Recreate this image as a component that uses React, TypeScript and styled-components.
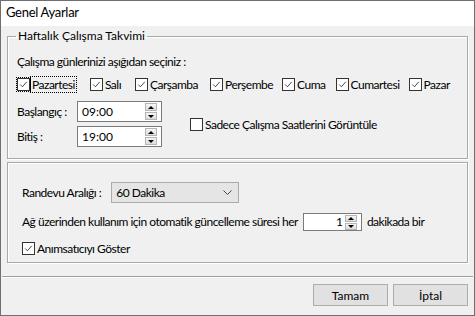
import React from "react";
import styled, { createGlobalStyle } from "styled-components";

const GlobalStyle = createGlobalStyle`
    html, body {
        margin: 0;
        padding: 0;
        background: #ffffff;
    }
    body {
        font-family: Lato, "Noto Sans", sans-serif;
        font-size: 12px;
        letter-spacing: -0.5px;
        color: #000000;
    }
`;

const Window = styled.div`
    width: 475px;
    height: 316px;
    box-sizing: border-box;
    border: 1px solid #6f6f6f;
    background: #f0f0f0;
    display: flex;
    flex-direction: column;
`;

const TitleBar = styled.div`
    height: 25px;
    line-height: 23px;
    padding-left: 5px;
    background: #ffffff;
    font-size: 13px;
    letter-spacing: -0.3px;
`;

const Body = styled.div`
    padding: 2px 6px 13px 6px;
    display: flex;
    flex-direction: column;
    gap: 3px;
`;

const GroupBox = styled.fieldset<{ $height: number; $pad: number }>`
    margin: 0;
    padding: 0 ${(p) => p.$pad}px;
    height: ${(p) => p.$height}px;
    box-sizing: border-box;
    border: 1px solid #a9a9a9;
    box-shadow: inset 1px 1px 0 #ffffff, 1px 1px 0 #ffffff;
    border-radius: 0;
    min-width: 0;

    legend {
        margin-left: -1px;
        padding: 0 2px;
        line-height: 16px;
        letter-spacing: 0;
    }
`;

const Stack = styled.div<{ $gap: number; $top: number }>`
    display: flex;
    flex-direction: column;
    gap: ${(p) => p.$gap}px;
    padding-top: ${(p) => p.$top}px;
`;

const Row = styled.div<{ $gap?: number; $top?: number }>`
    display: flex;
    align-items: center;
    gap: ${(p) => p.$gap ?? 0}px;
    margin-top: ${(p) => p.$top ?? 0}px;
    white-space: nowrap;
`;

const Label = styled.span`
    line-height: 16px;
`;

const CheckItem = styled.label<{ $focused?: boolean; $after?: number }>`
    display: inline-flex;
    align-items: center;
    gap: 1px;
    line-height: 15px;
    margin-right: ${(p) => p.$after ?? 0}px;

    span {
        outline: ${(p) => (p.$focused ? "1px dotted #000" : "none")};
        outline-offset: 0;
        padding: 0 1px;
    }
`;

const Box = styled.span`
    width: 13px;
    height: 13px;
    box-sizing: border-box;
    border: 1px solid #333333;
    background: #ffffff;
    display: inline-flex;
    align-items: center;
    justify-content: center;
    flex-shrink: 0;
`;

const Check: React.FC<{
    checked: boolean;
    label: string;
    focused?: boolean;
    after?: number;
}> = ({ checked, label, focused, after }) => (
    <CheckItem $focused={focused} $after={after}>
        <Box>
            {checked && (
                <svg width="11" height="11" viewBox="0 0 11 11">
                    <polyline
                        points="1.5,5.5 4.2,8.3 9.5,2.2"
                        fill="none"
                        stroke="#222"
                        strokeWidth="1"
                    />
                </svg>
            )}
        </Box>
        <span>{label}</span>
    </CheckItem>
);

const TimeGrid = styled.div`
    display: grid;
    grid-template-columns: 60px 85px;
    row-gap: 4px;
    align-items: center;
`;

const Field = styled.div<{ $width: number; $height: number; $align?: string }>`
    width: ${(p) => p.$width}px;
    height: ${(p) => p.$height}px;
    box-sizing: border-box;
    border: 1px solid #7a7a7a;
    background: #ffffff;
    display: flex;
    align-items: center;
    padding-left: 4px;
    padding-right: 4px;
    gap: 2px;

    .value {
        flex: 1;
        text-align: ${(p) => p.$align ?? "left"};
        line-height: 16px;
        letter-spacing: 0;
    }
`;

const Spin = styled.div`
    width: 12px;
    display: flex;
    flex-direction: column;
    gap: 1px;
`;

const SpinButton = styled.div<{ $up: boolean; $h: number }>`
    height: ${(p) => p.$h}px;
    box-sizing: border-box;
    border: 1px solid #b5b5b5;
    background: linear-gradient(#f6f6f6, #dcdcdc);
    display: flex;
    align-items: center;
    justify-content: center;

    &::after {
        content: "";
        border-left: 3px solid transparent;
        border-right: 3px solid transparent;
        ${(p) =>
            p.$up
                ? "border-bottom: 3px solid #000;"
                : "border-top: 3px solid #000;"}
    }
`;

const Spinner: React.FC<{ size: number }> = ({ size }) => (
    <Spin>
        <SpinButton $up $h={size} />
        <SpinButton $up={false} $h={size} />
    </Spin>
);

const Select = styled.div`
    width: 128px;
    height: 21px;
    box-sizing: border-box;
    border: 1px solid #acacac;
    background: #e5e5e5;
    display: flex;
    align-items: center;
    justify-content: space-between;
    padding: 0 6px 0 4px;
    line-height: 16px;
`;

const Separator = styled.div`
    height: 0;
    border-top: 1px solid #a0a0a0;
    border-bottom: 1px solid #ffffff;
    margin: 0 1px;
`;

const Footer = styled.div`
    flex: 1;
    display: flex;
    justify-content: flex-end;
    align-items: flex-start;
    gap: 5px;
    padding: 6px 6px 0 0;
`;

const Button = styled.button`
    width: 75px;
    height: 22px;
    box-sizing: border-box;
    border: 1px solid #adadad;
    background: #e1e1e1;
    font-family: inherit;
    font-size: 12px;
    letter-spacing: 0;
    color: #000;
    padding: 0;
`;

// extra space after each day so the boxes land where the original dialog put them
const days: { name: string; after: number }[] = [
    { name: "Pazartesi", after: 3 },
    { name: "Salı", after: 2 },
    { name: "Çarşamba", after: 0 },
    { name: "Perşembe", after: -3 },
    { name: "Cuma", after: -2 },
    { name: "Cumartesi", after: -3 },
    { name: "Pazar", after: 0 },
];

const App: React.FC = () => {
    return (
        <>
            <GlobalStyle />
            <Window>
                <TitleBar>Genel Ayarlar</TitleBar>
                <Body>
                    <GroupBox $height={131} $pad={9}>
                        <legend>Haftalık Çalışma Takvimi</legend>
                        <Stack $gap={7} $top={10}>
                            <Label>Çalışma günlerinizi aşığıdan seçiniz :</Label>
                            <Row $gap={11}>
                                {days.map((day, i) => (
                                    <Check
                                        key={day.name}
                                        checked
                                        label={day.name}
                                        focused={i === 0}
                                        after={day.after}
                                    />
                                ))}
                            </Row>
                            <Row $gap={28} $top={2}>
                                <TimeGrid>
                                    <Label>Başlangıç :</Label>
                                    <Field $width={85} $height={21}>
                                        <span className="value">09:00</span>
                                        <Spinner size={8} />
                                    </Field>
                                    <Label>Bitiş :</Label>
                                    <Field $width={85} $height={21}>
                                        <span className="value">19:00</span>
                                        <Spinner size={8} />
                                    </Field>
                                </TimeGrid>
                                <Check
                                    checked={false}
                                    label="Sadece Çalışma Saatlerini Görüntüle"
                                />
                            </Row>
                        </Stack>
                    </GroupBox>
                    <GroupBox $height={101} $pad={14}>
                        <Stack $gap={10} $top={19}>
                            <Row $gap={10}>
                                <Label>Randevu Aralığı :</Label>
                                <Select>
                                    <span>60 Dakika</span>
                                    <svg width="9" height="6" viewBox="0 0 9 6">
                                        <polyline
                                            points="0.5,0.5 4.5,4.5 8.5,0.5"
                                            fill="none"
                                            stroke="#444"
                                            strokeWidth="1"
                                        />
                                    </svg>
                                </Select>
                            </Row>
                            <Row $gap={5}>
                                <Label>
                                    Ağ üzerinden kullanım için otomatik güncelleme
                                    süresi her
                                </Label>
                                <Field $width={59} $height={18} $align="right">
                                    <span className="value">1</span>
                                    <Spinner size={7} />
                                </Field>
                                <Label>dakikada bir</Label>
                            </Row>
                            <Check checked label="Anımsatıcıyı Göster" />
                        </Stack>
                    </GroupBox>
                </Body>
                <Separator />
                <Footer>
                    <Button>Tamam</Button>
                    <Button>İptal</Button>
                </Footer>
            </Window>
        </>
    );
};

export default App;
